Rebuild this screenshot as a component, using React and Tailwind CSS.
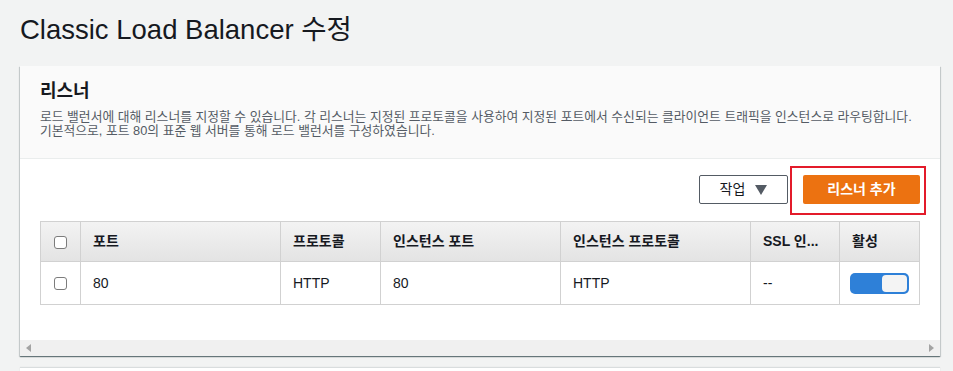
import React, { useState } from "react"

const font = "font-['Liberation_Sans','Noto_Sans_CJK_KR',sans-serif]"

const Checkbox = () => (
    <span className="inline-block w-[13px] h-[13px] rounded-[3px] border border-[#7c7c7c] bg-white align-middle" />
)

const Toggle = ({ on }) => (
    <div className={`w-[59px] h-[21px] rounded-[5px] p-[2px] flex ${on ? "bg-[#2e80d8] justify-end" : "bg-[#aab7b8] justify-start"}`}>
        <div className="w-[25px] h-full rounded-[4px] bg-[#f4f4f4]" />
    </div>
)

const columns = [
    { label: "포트", width: "w-[200px]" },
    { label: "프로토콜", width: "w-[100px]" },
    { label: "인스턴스 포트", width: "w-[180px]" },
    { label: "인스턴스 프로토콜", width: "w-[190px]" },
    { label: "SSL 인...", width: "w-[89px]" },
    { label: "활성", width: "w-[80px]" },
]

const listeners = [
    { port: "80", protocol: "HTTP", instancePort: "80", instanceProtocol: "HTTP", ssl: "--", enabled: true },
]

const App = () => {
    const [rows] = useState(listeners)

    return (
        <div className={`h-screen overflow-hidden bg-[#f2f3f3] pl-5 pr-[13px] text-[#16191f] ${font}`}>
            <h1 className="pt-[12px] text-[27.5px] leading-[36px] font-normal">Classic Load Balancer 수정</h1>

            {/* listener card */}
            <div className="mt-[18px] bg-white shadow-[0_1px_1px_0_rgba(0,28,36,0.45),1px_1px_1px_0_rgba(0,28,36,0.12),-1px_1px_1px_0_rgba(0,28,36,0.12)]">
                <div className="bg-[#fafafa] border-b border-[#eaeded] px-5 pt-[13px] pb-[20px]">
                    <h2 className="text-[18px] leading-[24px] font-bold">리스너</h2>
                    <p className="mt-[7px] text-[12.8px] leading-[14px] text-[#545b64]">
                        로드 밸런서에 대해 리스너를 지정할 수 있습니다. 각 리스너는 지정된 프로토콜을 사용하여 지정된 포트에서 수신되는 클라이언트 트래픽을 인스턴스로 라우팅합니다.
                        <br />
                        기본적으로, 포트 80의 표준 웹 서버를 통해 로드 밸런서를 구성하였습니다.
                    </p>
                </div>

                <div className="px-5 pt-4 pb-[35px]">
                    <div className="flex justify-end items-center">
                        <button className="h-[29px] w-[89px] border border-[#545b64] rounded-[2px] bg-white text-[14px] text-[#545b64] font-bold flex items-center justify-center gap-[10px]">
                            <span className="text-[#16191f] font-normal">작업</span>
                            <svg width="12" height="10" viewBox="0 0 12 10"><path d="M0 0h12L6 10z" fill="#545b64" /></svg>
                        </button>
                        <div className="relative ml-[15px]">
                            <button className="h-[29px] w-[117px] rounded-[2px] bg-[#ec7211] text-white text-[14px] font-bold">리스너 추가</button>
                            <div className="absolute top-[-9px] bottom-[-11px] left-[-13px] right-[-6px] border-2 border-[#e31b2a] pointer-events-none" />
                        </div>
                    </div>

                    <table className="mt-[17px] w-[880px] border-collapse text-[14px] table-fixed">
                        <thead>
                            <tr className="h-[40px] bg-gradient-to-b from-[#f3f3f3] to-[#e3e3e3]">
                                <th className="w-[40px] border border-[#d1d1d1] text-center">
                                    <Checkbox />
                                </th>
                                {columns.map(c => (
                                    <th key={c.label} className={`${c.width} border border-[#d1d1d1] px-3 text-left font-bold`}>
                                        {c.label}
                                    </th>
                                ))}
                            </tr>
                        </thead>
                        <tbody>
                            {rows.map((r, i) => (
                                <tr key={i} className="h-[43px]">
                                    <td className="border border-[#d1d1d1] text-center"><Checkbox /></td>
                                    <td className="border border-[#d1d1d1] px-3">{r.port}</td>
                                    <td className="border border-[#d1d1d1] px-3">{r.protocol}</td>
                                    <td className="border border-[#d1d1d1] px-3">{r.instancePort}</td>
                                    <td className="border border-[#d1d1d1] px-3">{r.instanceProtocol}</td>
                                    <td className="border border-[#d1d1d1] px-3">{r.ssl}</td>
                                    <td className="border border-[#d1d1d1] px-[10px]"><Toggle on={r.enabled} /></td>
                                </tr>
                            ))}
                        </tbody>
                    </table>
                </div>

                {/* horizontal scrollbar */}
                <div className="h-[16px] bg-[#f0f0f0] flex items-center justify-between px-[6px]">
                    <svg width="5" height="8" viewBox="0 0 5 8"><path d="M5 0v8L0 4z" fill="#a3a3a3" /></svg>
                    <svg width="5" height="8" viewBox="0 0 5 8"><path d="M0 0v8l5-4z" fill="#a3a3a3" /></svg>
                </div>
            </div>

            <div className="mt-3 h-10 bg-white shadow-[0_-1px_1px_0_rgba(0,28,36,0.1)]" />
        </div>
    )
}

export default App
